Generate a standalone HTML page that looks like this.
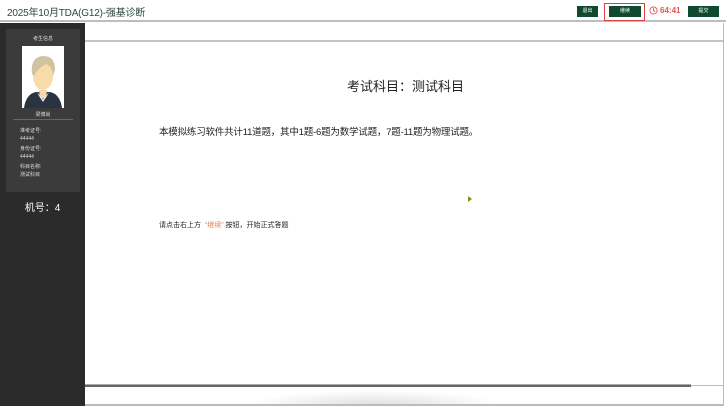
<!DOCTYPE html>
<html><head><meta charset="utf-8"><style>
*{margin:0;padding:0;box-sizing:border-box}
body{width:726px;height:406px;overflow:hidden;background:#fff;font-family:"Liberation Sans","Noto Sans CJK SC",sans-serif;position:relative}
.hdr{position:absolute;left:0;top:0;width:726px;height:22px;background:#fff;border-bottom:2px solid #bdbdbd}
.title{position:absolute;left:7px;top:4px;font-size:10px;color:#2a4a3a;letter-spacing:-0.2px}
.btn{position:absolute;top:6px;height:11px;background:#0f4a2e;color:#fff;font-size:5px;line-height:11px;text-align:center}
.side{position:absolute;left:0;top:23px;width:85px;height:383px;background:#2b2b2b}
.card{position:absolute;left:6px;top:6px;width:74px;height:163px;background:#3b3b3b}
.sm{color:#ddd;font-size:5px;position:absolute}
.main{position:absolute;left:85px;top:23px;width:638px;height:383px;background:#fff}
</style></head><body>
<div class="hdr">
<div class="title">2025年10月TDA(G12)-强基诊断</div>
<div class="btn" style="left:577px;width:21px">退出</div>
<div style="position:absolute;left:604px;top:3px;width:41px;height:18px;border:1px solid #e04040"></div>
<div class="btn" style="left:609px;width:32px">继续</div>
<svg style="position:absolute;left:649px;top:6px" width="9" height="9" viewBox="0 0 10 10"><circle cx="5" cy="5" r="4" fill="none" stroke="#e05555" stroke-width="1"/><path d="M5 2.5V5L6.8 6.3" fill="none" stroke="#e05555" stroke-width="1"/></svg>
<div style="position:absolute;left:660px;top:6px;font-size:8px;color:#e05555;font-weight:bold">64:41</div>
<div class="btn" style="left:688px;width:31px">提交</div>
</div>
<div class="side">
<div class="card">
<div class="sm" style="left:0;width:74px;text-align:center;top:6px">考生信息</div>
<div style="position:absolute;left:16px;top:17px;width:42px;height:62px;background:#fff;overflow:hidden">
<svg width="42" height="62" viewBox="0 0 42 62">
<path d="M2 62 Q4 48 14 46 L28 46 Q38 48 40 62Z" fill="#2b3340"/>
<path d="M17 44 L25 44 L24 52 L18 52Z" fill="#f5d9a8"/>
<path d="M15 46 L21 53 L27 46 L25 50 L21 56 L17 50Z" fill="#e8e8e8"/>
<ellipse cx="21" cy="30" rx="10" ry="14" fill="#f7dcaa"/>
<path d="M10 28 Q8 12 20 10 Q33 9 33 24 L31 30 Q30 20 24 18 Q16 22 12 30Z" fill="#cfc3a2"/>
</svg></div>
<div class="sm" style="left:0;width:74px;text-align:center;top:82px">梁博尚</div>
<div style="position:absolute;left:7px;top:90px;width:60px;height:1px;background:#666"></div>
<div class="sm" style="left:14px;top:98px;line-height:8px">准考证号:<br>44444</div>
<div class="sm" style="left:14px;top:116px;line-height:8px">身份证号:<br>44444</div>
<div class="sm" style="left:14px;top:134px;line-height:8px">科目名称:<br>测试科目</div>
</div>
<div style="position:absolute;left:0;width:85px;top:176px;text-align:center;color:#fff;font-size:10px">机号：4</div>
</div>
<div class="main">
<div style="position:absolute;left:0;top:17px;width:638px;height:2px;background:#c4c4c4"></div>
<div style="position:absolute;left:262px;top:53px;font-size:13px;color:#222">考试科目：测试科目</div>
<div style="position:absolute;left:74px;top:101px;font-size:9.5px;color:#222;letter-spacing:-0.2px">本模拟练习软件共计11道题，其中1题-6题为数学试题，7题-11题为物理试题。</div>
<div style="position:absolute;left:383px;top:173px;width:0;height:0;border-left:4px solid #7a9a10;border-top:3px solid transparent;border-bottom:3px solid transparent"></div>
<div style="position:absolute;left:74px;top:197px;font-size:7px;color:#222">请点击右上方 &nbsp;<span style="color:#e08050">“继续”</span> 按钮，开始正式答题</div>
<div style="position:absolute;left:0;top:361px;width:606px;height:3px;background:#666;border-top:1px solid #aaa"></div>
<div style="position:absolute;left:606px;top:362px;width:32px;height:1px;background:#bbb"></div>
<div style="position:absolute;left:160px;top:367px;width:260px;height:16px;background:radial-gradient(ellipse at 50% 100%,#ddd,#fff 70%)"></div>
<div style="position:absolute;left:0;top:381px;width:638px;height:2px;background:#bbb"></div>
</div>
<div style="position:absolute;left:723px;top:23px;width:1px;height:383px;background:#bbb"></div>
</body></html>
